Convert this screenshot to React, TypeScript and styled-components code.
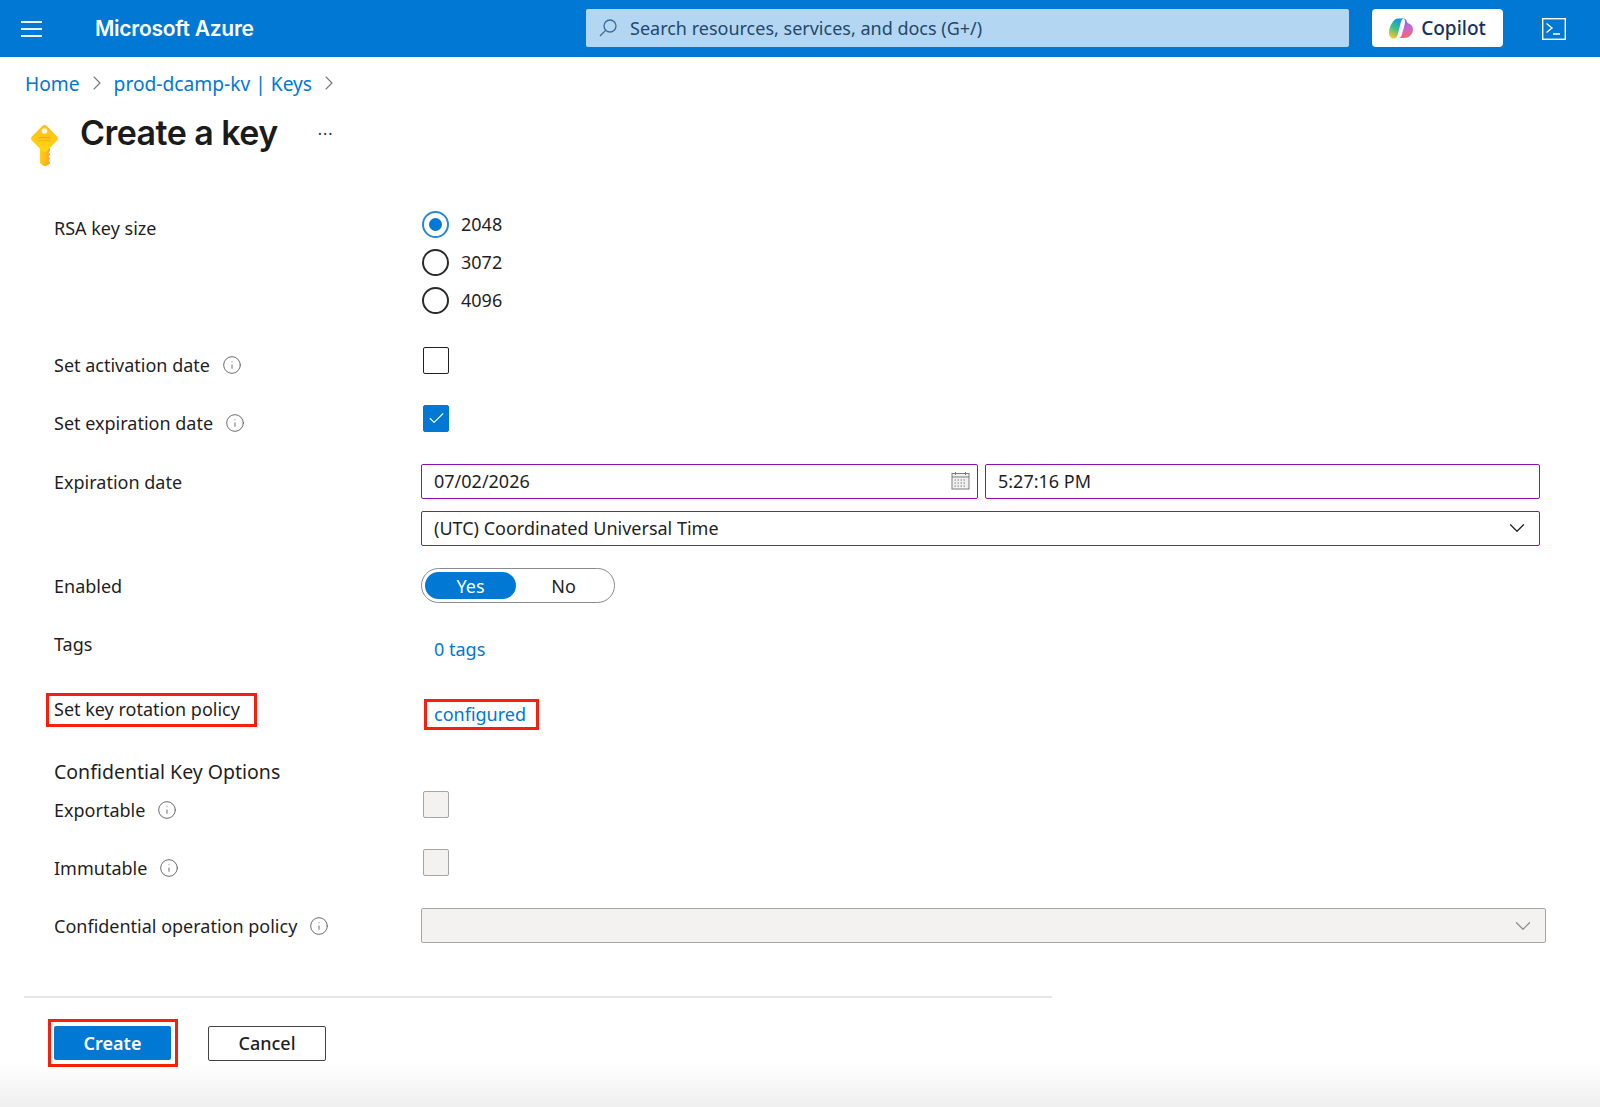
import { useState } from "react";
import styled, { createGlobalStyle } from "styled-components";
import { ChevronDown, ChevronRight, Info, Check } from "lucide-react";

const GlobalStyle = createGlobalStyle`
    html, body {
        margin: 0;
        padding: 0;
        background: #fff;
    }
    body {
        font-family: "Noto Sans", "Open Sans", sans-serif;
        color: #1f1f1f;
    }
`;

const StyledPage = styled.div`
    width: 1600px;
    height: 1107px;
    display: flex;
    flex-direction: column;
    overflow: hidden;
`;

const StyledHeader = styled.header`
    height: 57px;
    flex-shrink: 0;
    background-color: #0078d4;
    display: flex;
    align-items: center;
`;

const StyledMenuButton = styled.div`
    width: 21px;
    margin-left: 21px;
    display: flex;
    flex-direction: column;
    gap: 5px;
    span {
        display: block;
        height: 2px;
        background: #e8f3fb;
    }
`;

const StyledBrand = styled.div`
    margin-left: 53px;
    width: 491px;
    color: #fff;
    font-family: "Inter", sans-serif;
    font-size: 21px;
    font-weight: 600;
    letter-spacing: -0.25px;
`;

const StyledSearch = styled.div`
    width: 763px;
    height: 38px;
    margin-top: -1px;
    box-sizing: border-box;
    padding-left: 12px;
    background-color: #b3d7f3;
    border-radius: 2px;
    display: flex;
    align-items: center;
    gap: 12px;
    color: #24476b;
    font-size: 18px;
`;

const StyledCopilot = styled.div`
    margin: -1px 0 0 23px;
    width: 131px;
    height: 38px;
    background: #fff;
    border-radius: 4px;
    display: flex;
    align-items: center;
    justify-content: center;
    gap: 8px;
    color: #14315c;
    font-size: 19px;
    font-weight: 500;
`;

const StyledTerminal = styled.div`
    margin-left: 39px;
    display: flex;
`;

const StyledCrumbs = styled.nav`
    height: 52px;
    flex-shrink: 0;
    padding: 0 0 2px 25px;
    display: flex;
    align-items: center;
    gap: 5px;
    font-size: 19.2px;
    color: #0078d4;
    svg {
        color: #777;
    }
`;

const StyledTitleBar = styled.div`
    height: 94px;
    flex-shrink: 0;
    padding-left: 31px;
    display: flex;
    align-items: flex-start;
`;

const StyledKeyMark = styled.div`
    margin-top: 14px;
    display: flex;
`;

const StyledTitle = styled.h1`
    margin: 0 0 0 22px;
    font-family: "Inter", sans-serif;
    font-size: 34px;
    line-height: 44px;
    font-weight: 600;
    letter-spacing: -0.55px;
    color: #1b1b1b;
`;

const StyledMore = styled.span`
    margin: 12px 0 0 40px;
    font-size: 16px;
    letter-spacing: 1px;
    color: #333;
`;

const StyledForm = styled.div`
    padding-left: 54px;
`;

const StyledRow = styled.div<{ $gap?: number }>`
    display: grid;
    grid-template-columns: 367px 1fr;
    margin-top: ${props => props.$gap ?? 0}px;
`;

const StyledLabel = styled.div<{ $top?: number }>`
    padding-top: ${props => props.$top ?? 5}px;
    display: flex;
    align-items: flex-start;
    gap: 12px;
    font-size: 18px;
    line-height: 26px;
`;

const StyledInfoIcon = styled.span`
    display: flex;
    height: 26px;
    align-items: center;
    color: #5f5f5f;
`;

const StyledHighlightedLabel = styled.div`
    justify-self: start;
    margin-left: -8px;
    width: 211px;
    height: 34px;
    box-sizing: border-box;
    padding-left: 5px;
    border: 3.500px solid #f5210f;
    font-size: 18px;
    line-height: 26px;
`;

const StyledRadioRow = styled.label`
    height: 38px;
    display: flex;
    align-items: center;
    gap: 12px;
    font-size: 18px;
    padding-left: 1px;
`;

const StyledRadio = styled.span<{ $checked?: boolean }>`
    width: 27px;
    height: 27px;
    box-sizing: border-box;
    border-radius: 50%;
    border: ${props => (props.$checked ? "2px solid #2b88d8" : "2px solid #2a2a2a")};
    display: flex;
    align-items: center;
    justify-content: center;
    &::after {
        content: "";
        display: ${props => (props.$checked ? "block" : "none")};
        width: 13px;
        height: 13px;
        border-radius: 50%;
        background: #0078d4;
    }
`;

const StyledCheckbox = styled.span<{ $checked?: boolean; $disabled?: boolean }>`
    margin-left: 2px;
    width: 26px;
    height: 27px;
    box-sizing: border-box;
    border-radius: 2px;
    display: flex;
    align-items: center;
    justify-content: center;
    color: #fff;
    border: 1.5px solid ${props => (props.$checked ? "#0078d4" : props.$disabled ? "#a6a6a6" : "#222")};
    background: ${props => (props.$checked ? "#0078d4" : props.$disabled ? "#f3f2f1" : "#fff")};
`;

const StyledControlStack = styled.div`
    width: 1119px;
    display: flex;
    flex-direction: column;
    gap: 12px;
`;

const StyledInputRow = styled.div`
    display: flex;
    gap: 7px;
`;

const StyledField = styled.div<{ $flex: number }>`
    flex: ${props => props.$flex};
    height: 35px;
    box-sizing: border-box;
    padding: 0 7px 2px 12px;
    border: 1.5px solid #8f0fb0;
    border-radius: 2px;
    display: flex;
    align-items: center;
    justify-content: space-between;
    font-size: 18px;
    line-height: 30px;
    color: #1f1f1f;
`;

const StyledSelect = styled(StyledField)`
    flex: none;
    padding-right: 9px;
`;

const StyledDisabledSelect = styled.div`
    width: 1125px;
    height: 35px;
    box-sizing: border-box;
    padding-right: 9px;
    background: #f3f2f1;
    border: 1px solid #a6a6a6;
    border-radius: 2px;
    display: flex;
    align-items: center;
    justify-content: flex-end;
    color: #8a8a8a;
`;

const StyledToggle = styled.div`
    width: 194px;
    height: 35px;
    box-sizing: border-box;
    padding: 3px;
    border: 1.5px solid #8a8a8a;
    border-radius: 18px;
    display: flex;
    align-items: center;
`;

const StyledToggleOption = styled.div<{ $active?: boolean }>`
    width: ${props => (props.$active ? "91px" : "95px")};
    height: 27px;
    border-radius: 14px;
    display: flex;
    align-items: center;
    justify-content: center;
    font-size: 18px;
    color: ${props => (props.$active ? "#fff" : "#1f1f1f")};
    background: ${props => (props.$active ? "#0078d4" : "transparent")};
`;

const StyledLink = styled.a<{ $top?: number }>`
    display: block;
    margin-top: ${props => props.$top ?? 10}px;
    padding-left: 13px;
    font-size: 18px;
    line-height: 26px;
    color: #0078d4;
`;

const StyledHighlightedLink = styled.a`
    display: block;
    margin: 6px 0 0 3px;
    width: 115px;
    height: 31px;
    box-sizing: border-box;
    padding-left: 7px;
    border: 3.500px solid #f5210f;
    font-size: 18px;
    line-height: 24px;
    color: #0078d4;
`;

const StyledSectionHeading = styled.div`
    margin-top: 28px;
    font-size: 19.5px;
    line-height: 28px;
`;

const StyledFooter = styled.footer`
    flex: 1;
    margin-top: 53px;
    background: linear-gradient(to bottom, #fff 60%, #efefef 100%);
`;

const StyledDivider = styled.div`
    margin-left: 24px;
    width: 1028px;
    height: 2px;
    background: #e6e6e6;
`;

const StyledActions = styled.div`
    margin: 21px 0 0 48px;
    display: flex;
    align-items: center;
    gap: 30px;
`;

const StyledHighlight = styled.div`
    padding: 4px 4px 4px 3px;
    border: 3.500px solid #f5210f;
`;

const StyledPrimaryButton = styled.button`
    display: block;
    width: 117px;
    height: 34px;
    padding: 0;
    border: none;
    border-radius: 2px;
    background: #0078d4;
    color: #fff;
    font-family: inherit;
    font-size: 18px;
    font-weight: 600;
`;

const StyledSecondaryButton = styled.button`
    width: 118px;
    height: 35px;
    padding: 0;
    border: 1.5px solid #444;
    border-radius: 2px;
    background: #fff;
    color: #1f1f1f;
    font-family: inherit;
    font-size: 18px;
    font-weight: 500;
`;

function InfoMark() {
    return (
        <StyledInfoIcon>
            <Info size={20} strokeWidth={1.1} />
        </StyledInfoIcon>
    );
}

function SearchIcon() {
    return (
        <svg width="20" height="20" viewBox="0 0 20 20" fill="none" stroke="#3b6a94" strokeWidth="1.3">
            <circle cx="12" cy="8" r="6" />
            <path d="M7.600 12.400 2 18" />
        </svg>
    );
}

function CopilotIcon() {
    return (
        <svg width="24" height="21" viewBox="0 0 24 21">
            <defs>
                <linearGradient id="copilotLeft" x1="0.7" y1="0" x2="0.3" y2="1">
                    <stop offset="0" stopColor="#1a8fe8" />
                    <stop offset="0.5" stopColor="#35c08f" />
                    <stop offset="1" stopColor="#f7c928" />
                </linearGradient>
                <linearGradient id="copilotRight" x1="0.4" y1="0" x2="0.6" y2="1">
                    <stop offset="0" stopColor="#5a6ff0" />
                    <stop offset="0.45" stopColor="#c565d8" />
                    <stop offset="1" stopColor="#f86a6a" />
                </linearGradient>
            </defs>
            <path d="M8.500 0.500h6.500c-1.500.4-2.500 1.500-3 3.200L9 15.500C8.300 18.800 7 20.500 4.800 20.500 1.800 20.500 0 18 0 14.500 0 10 2.500 5 5.200 2.300 6.200 1.200 7.200.5 8.500.5z" fill="url(#copilotLeft)" />
            <path d="M14.500 0.500c1.700 0 2.700 1 3.200 2.700.4 1.300.8 1.800 2 2.300 2.800 1 4.300 3.200 4.300 6 0 3.500-2.500 6.500-5 7.800-1.200.6-2.500.7-9.500.7 1.800 0 2.800-1.300 3.300-3.200L15.800 6c.6-2.200.4-4.500-1.300-5.500z" fill="url(#copilotRight)" />
        </svg>
    );
}

function TerminalIcon() {
    return (
        <svg width="24" height="22" viewBox="0 0 24 22" fill="none" stroke="#fff" strokeWidth="1.4">
            <rect x="0.700" y="0.700" width="22.600" height="20.600" />
            <path d="M4.500 5.500 10 10l-5.500 4.500M11 16h7" />
        </svg>
    );
}

function KeyIcon() {
    return (
        <svg width="27" height="41" viewBox="0 0 27 41">
            <defs>
                <linearGradient id="keyHead" x1="0" y1="0" x2="0" y2="1">
                    <stop offset="0" stopColor="#ffbf1f" />
                    <stop offset="1" stopColor="#ffd70f" />
                </linearGradient>
                <linearGradient id="keyShaft" x1="0" y1="0" x2="1" y2="0">
                    <stop offset="0" stopColor="#ffd015" />
                    <stop offset="1" stopColor="#f9a825" />
                </linearGradient>
            </defs>
            <path d="M9 22h10v4l-1.500 1.500 1.500 1.500v1l-1.500 1.500 1.500 1.500v1l-1.500 1.500 1.500 1.500v1.500L15.500 41h-3L9 38z" fill="url(#keyShaft)" />
            <path d="M11 1.300a3.600 3.600 0 0 1 5 0l9.700 9.700a3.600 3.600 0 0 1 0 5L16 25.700a3.600 3.600 0 0 1-5 0L1.300 16a3.600 3.600 0 0 1 0-5z" fill="url(#keyHead)" />
            <circle cx="13.500" cy="6" r="2.800" fill="#fff7d6" />
            <rect x="7.500" y="12" width="12" height="1.300" fill="#f5a81c" />
            <rect x="7.500" y="14.800" width="12" height="1.300" fill="#f5b41c" />
        </svg>
    );
}

function CalendarIcon() {
    return (
        <svg width="19" height="19" viewBox="0 0 19 19" fill="none" stroke="#7d7d7d" strokeWidth="1">
            <rect x="1" y="2.500" width="17" height="15.500" fill="#f1f1f1" />
            <path d="M1 6h17M4.500 1v3M14.500 1v3" />
            <path d="M3.500 9h12M3.500 12h12M3.500 15h12" strokeDasharray="1.500 1.500" />
        </svg>
    );
}

export default function App() {
    const [keySize, setKeySize] = useState("2048");

    return (
        <>
            <GlobalStyle />
            <StyledPage>
                <StyledHeader>
                    <StyledMenuButton>
                        <span />
                        <span />
                        <span />
                    </StyledMenuButton>
                    <StyledBrand>Microsoft Azure</StyledBrand>
                    <StyledSearch>
                        <SearchIcon />
                        Search resources, services, and docs (G+/)
                    </StyledSearch>
                    <StyledCopilot>
                        <CopilotIcon />
                        Copilot
                    </StyledCopilot>
                    <StyledTerminal>
                        <TerminalIcon />
                    </StyledTerminal>
                </StyledHeader>

                <StyledCrumbs>
                    <span>Home</span>
                    <ChevronRight size={24} strokeWidth={1.1} />
                    <span>prod-dcamp-kv | Keys</span>
                    <ChevronRight size={24} strokeWidth={1.1} />
                </StyledCrumbs>

                <StyledTitleBar>
                    <StyledKeyMark>
                        <KeyIcon />
                    </StyledKeyMark>
                    <StyledTitle>Create a key</StyledTitle>
                    <StyledMore>···</StyledMore>
                </StyledTitleBar>

                <StyledForm>
                    <StyledRow>
                        <StyledLabel $top={10}>RSA key size</StyledLabel>
                        <div>
                            {["2048", "3072", "4096"].map(size => (
                                <StyledRadioRow key={size} onClick={() => setKeySize(size)}>
                                    <StyledRadio $checked={keySize === size} />
                                    {size}
                                </StyledRadioRow>
                            ))}
                        </div>
                    </StyledRow>

                    <StyledRow $gap={28}>
                        <StyledLabel>Set activation date <InfoMark /></StyledLabel>
                        <StyledCheckbox />
                    </StyledRow>

                    <StyledRow $gap={27}>
                        <StyledLabel>Set expiration date <InfoMark /></StyledLabel>
                        <StyledCheckbox $checked>
                            <Check size={19} strokeWidth={1.4} />
                        </StyledCheckbox>
                    </StyledRow>

                    <StyledRow $gap={28}>
                        <StyledLabel>Expiration date</StyledLabel>
                        <StyledControlStack>
                            <StyledInputRow>
                                <StyledField $flex={557}>
                                    07/02/2026
                                    <CalendarIcon />
                                </StyledField>
                                <StyledField $flex={555}>5:27:16 PM</StyledField>
                            </StyledInputRow>
                            <StyledSelect $flex={1}>
                                (UTC) Coordinated Universal Time
                                <ChevronDown size={26} strokeWidth={1.1} />
                            </StyledSelect>
                        </StyledControlStack>
                    </StyledRow>

                    <StyledRow $gap={22}>
                        <StyledLabel>Enabled</StyledLabel>
                        <StyledToggle>
                            <StyledToggleOption $active>Yes</StyledToggleOption>
                            <StyledToggleOption>No</StyledToggleOption>
                        </StyledToggle>
                    </StyledRow>

                    <StyledRow $gap={23}>
                        <StyledLabel>Tags</StyledLabel>
                        <StyledLink>0 tags</StyledLink>
                    </StyledRow>

                    <StyledRow $gap={31}>
                        <StyledHighlightedLabel>Set key rotation policy</StyledHighlightedLabel>
                        <StyledHighlightedLink>configured</StyledHighlightedLink>
                    </StyledRow>

                    <StyledSectionHeading>Confidential Key Options</StyledSectionHeading>

                    <StyledRow $gap={5}>
                        <StyledLabel $top={6}>Exportable <InfoMark /></StyledLabel>
                        <StyledCheckbox $disabled />
                    </StyledRow>

                    <StyledRow $gap={26}>
                        <StyledLabel $top={6}>Immutable <InfoMark /></StyledLabel>
                        <StyledCheckbox $disabled />
                    </StyledRow>

                    <StyledRow $gap={27}>
                        <StyledLabel>Confidential operation policy <InfoMark /></StyledLabel>
                        <StyledDisabledSelect>
                            <ChevronDown size={26} strokeWidth={1.1} />
                        </StyledDisabledSelect>
                    </StyledRow>
                </StyledForm>

                <StyledFooter>
                    <StyledDivider />
                    <StyledActions>
                        <StyledHighlight>
                            <StyledPrimaryButton>Create</StyledPrimaryButton>
                        </StyledHighlight>
                        <StyledSecondaryButton>Cancel</StyledSecondaryButton>
                    </StyledActions>
                </StyledFooter>
            </StyledPage>
        </>
    );
}
